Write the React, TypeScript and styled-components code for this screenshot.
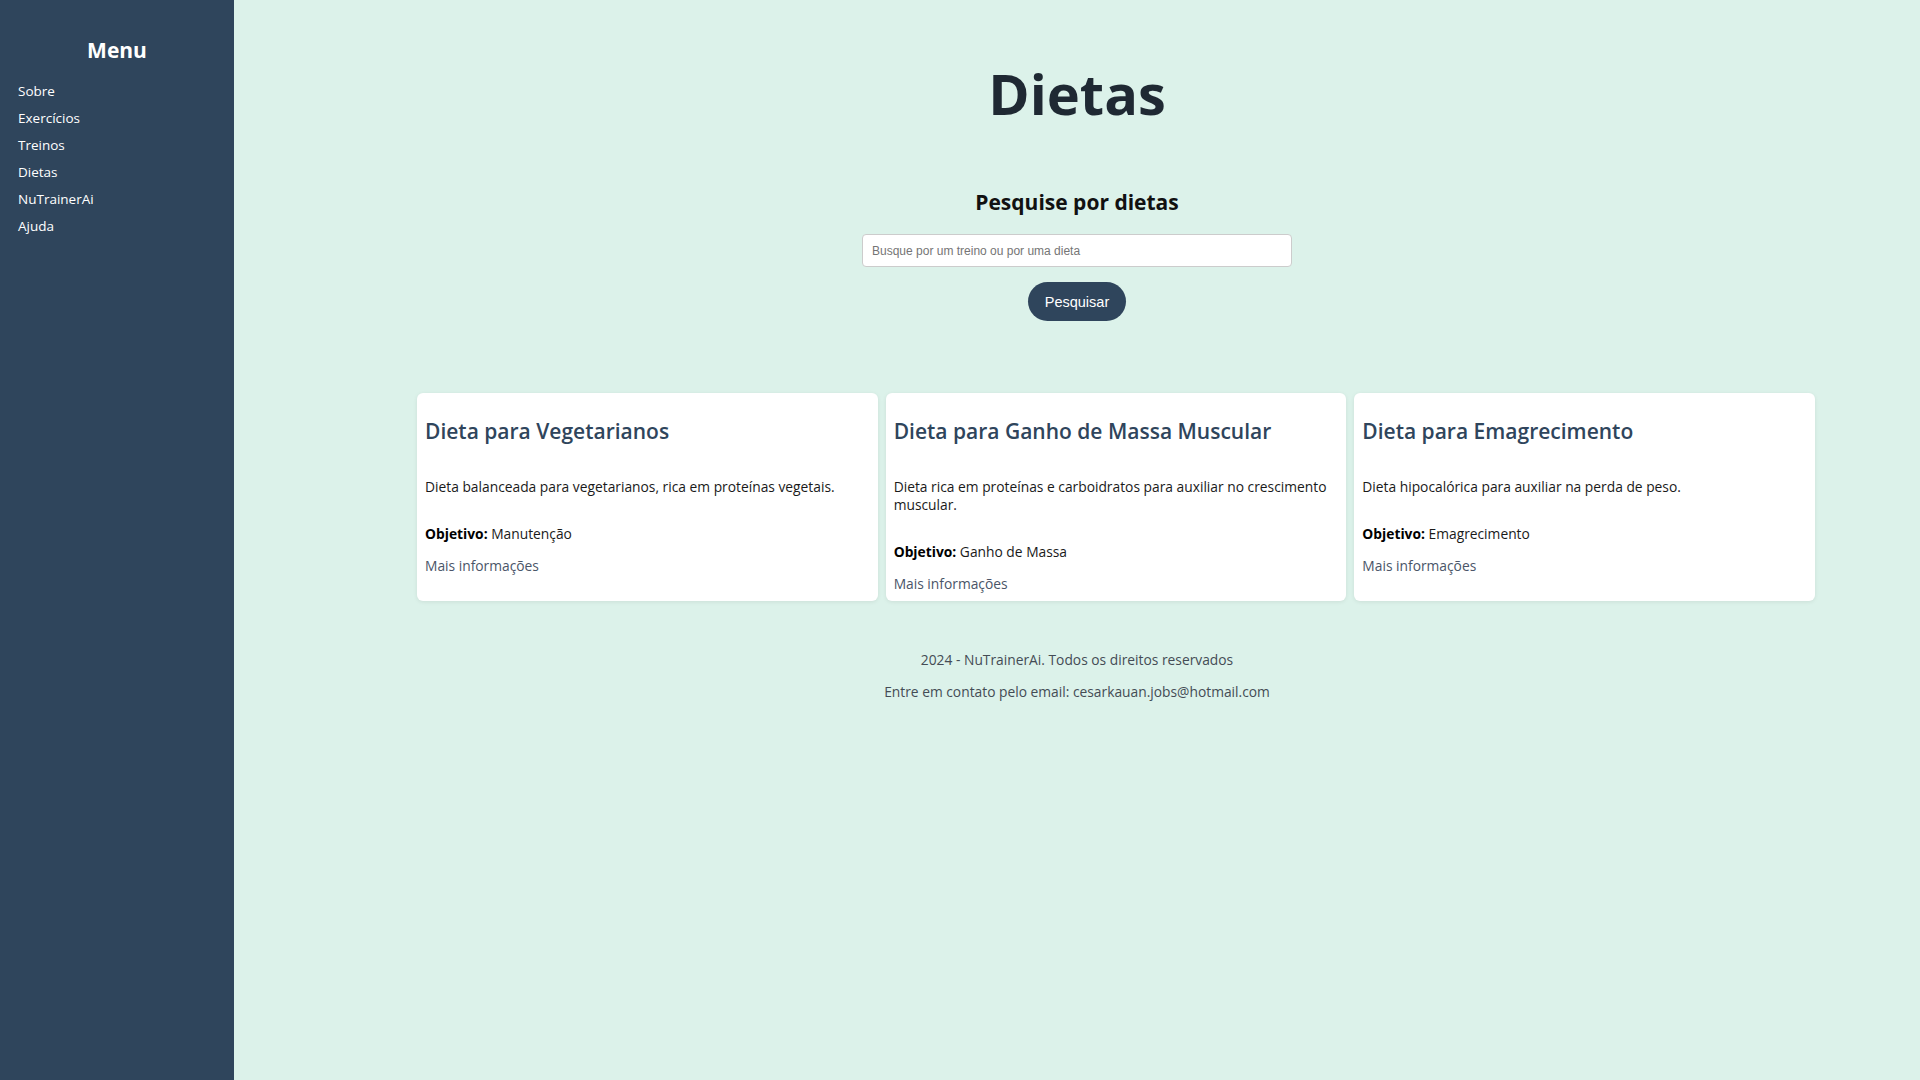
import React from "react";
import styled, { createGlobalStyle } from "styled-components";

const GlobalStyle = createGlobalStyle`
  html, body {
    margin: 0;
    padding: 0;
    background: #dcf2ea;
  }
  body {
    font-family: "Open Sans", Roboto, sans-serif;
  }
  * { box-sizing: border-box; }
`;

const Layout = styled.div`
  display: flex;
  min-height: 1080px;
  background: #dcf2ea;
`;

const Sidebar = styled.nav`
  width: 234px;
  flex-shrink: 0;
  background: #2f455c;
  color: #ffffff;
  padding: 36px 18px 0;
`;

const MenuTitle = styled.h2`
  margin: 0 0 14px;
  font-size: 21px;
  line-height: 28px;
  font-weight: 700;
  text-align: center;
`;

const MenuList = styled.ul`
  list-style: none;
  margin: 0;
  padding: 0;
  display: flex;
  flex-direction: column;
`;

const MenuItem = styled.li`
  font-size: 13.5px;
  line-height: 27px;
  color: #ffffff;
`;

const Main = styled.main`
  flex: 1;
  display: flex;
  flex-direction: column;
  align-items: center;
`;

const PageTitle = styled.h1`
  margin: 58px 0 0;
  font-size: 56px;
  line-height: 70px;
  font-weight: 700;
  color: #1f2933;
`;

const SearchHeading = styled.h2`
  margin: 60px 0 0;
  font-size: 21px;
  line-height: 28px;
  font-weight: 700;
  color: #111111;
`;

const SearchInput = styled.input`
  margin-top: 18px;
  width: 430px;
  height: 33px;
  padding: 0 9px;
  border: 1px solid #cccccc;
  border-radius: 4px;
  background: #ffffff;
  font-family: "Liberation Sans", Arial, sans-serif;
  font-size: 12px;
  color: #333333;
  &::placeholder { color: #757575; }
`;

const SearchButton = styled.button`
  margin-top: 15px;
  height: 39px;
  padding: 0 17px;
  border: none;
  border-radius: 20px;
  background: #2f455c;
  color: #ffffff;
  font-family: "Liberation Sans", Arial, sans-serif;
  font-size: 14.5px;
`;

const CardGrid = styled.section`
  align-self: flex-start;
  width: 1398px;
  display: grid;
  grid-template-columns: repeat(3, 1fr);
  gap: 8px;
  margin: 72px 0 0 183px;
`;

const Card = styled.article`
  background: #ffffff;
  border-radius: 6px;
  padding: 0 8px 8px;
  box-shadow: 0 1px 4px rgba(0, 0, 0, 0.08);
`;

const CardTitle = styled.h3`
  margin: 24px 0 0;
  font-size: 21px;
  line-height: 28px;
  font-weight: 600;
  color: #2f455c;
`;

const CardText = styled.p<{ $gap: number }>`
  margin: ${(p) => p.$gap}px 0 0;
  font-size: 13.8px;
  line-height: 18px;
  color: #1a1a1a;
  b { font-weight: 700; color: #000; }
`;

const MoreLink = styled.a`
  display: block;
  margin-top: 14px;
  font-size: 13.8px;
  line-height: 18px;
  color: #4a5568;
  text-decoration: none;
`;

const Footer = styled.footer`
  margin-top: 50px;
  display: flex;
  flex-direction: column;
  align-items: center;
  gap: 14px;
  font-size: 13.8px;
  line-height: 18px;
  color: #444c55;
`;

const diets = [
  {
    title: "Dieta para Vegetarianos",
    desc: "Dieta balanceada para vegetarianos, rica em proteínas vegetais.",
    goal: "Manutenção",
  },
  {
    title: "Dieta para Ganho de Massa Muscular",
    desc: "Dieta rica em proteínas e carboidratos para auxiliar no crescimento muscular.",
    goal: "Ganho de Massa",
  },
  {
    title: "Dieta para Emagrecimento",
    desc: "Dieta hipocalórica para auxiliar na perda de peso.",
    goal: "Emagrecimento",
  },
];

const menu = ["Sobre", "Exercícios", "Treinos", "Dietas", "NuTrainerAi", "Ajuda"];

export default function App() {
  return (
    <>
      <GlobalStyle />
      <Layout>
        <Sidebar>
          <MenuTitle>Menu</MenuTitle>
          <MenuList>
            {menu.map((m) => (
              <MenuItem key={m}>{m}</MenuItem>
            ))}
          </MenuList>
        </Sidebar>
        <Main>
          <PageTitle>Dietas</PageTitle>
          <SearchHeading>Pesquise por dietas</SearchHeading>
          <SearchInput placeholder="Busque por um treino ou por uma dieta" />
          <SearchButton>Pesquisar</SearchButton>
          <CardGrid>
            {diets.map((d) => (
              <Card key={d.title}>
                <CardTitle>{d.title}</CardTitle>
                <CardText $gap={33}>{d.desc}</CardText>
                <CardText $gap={29}>
                  <b>Objetivo:</b> {d.goal}
                </CardText>
                <MoreLink href="#">Mais informações</MoreLink>
              </Card>
            ))}
          </CardGrid>
          <Footer>
            <span>2024 - NuTrainerAi. Todos os direitos reservados</span>
            <span>Entre em contato pelo email: cesarkauan.jobs@hotmail.com</span>
          </Footer>
        </Main>
      </Layout>
    </>
  );
}
